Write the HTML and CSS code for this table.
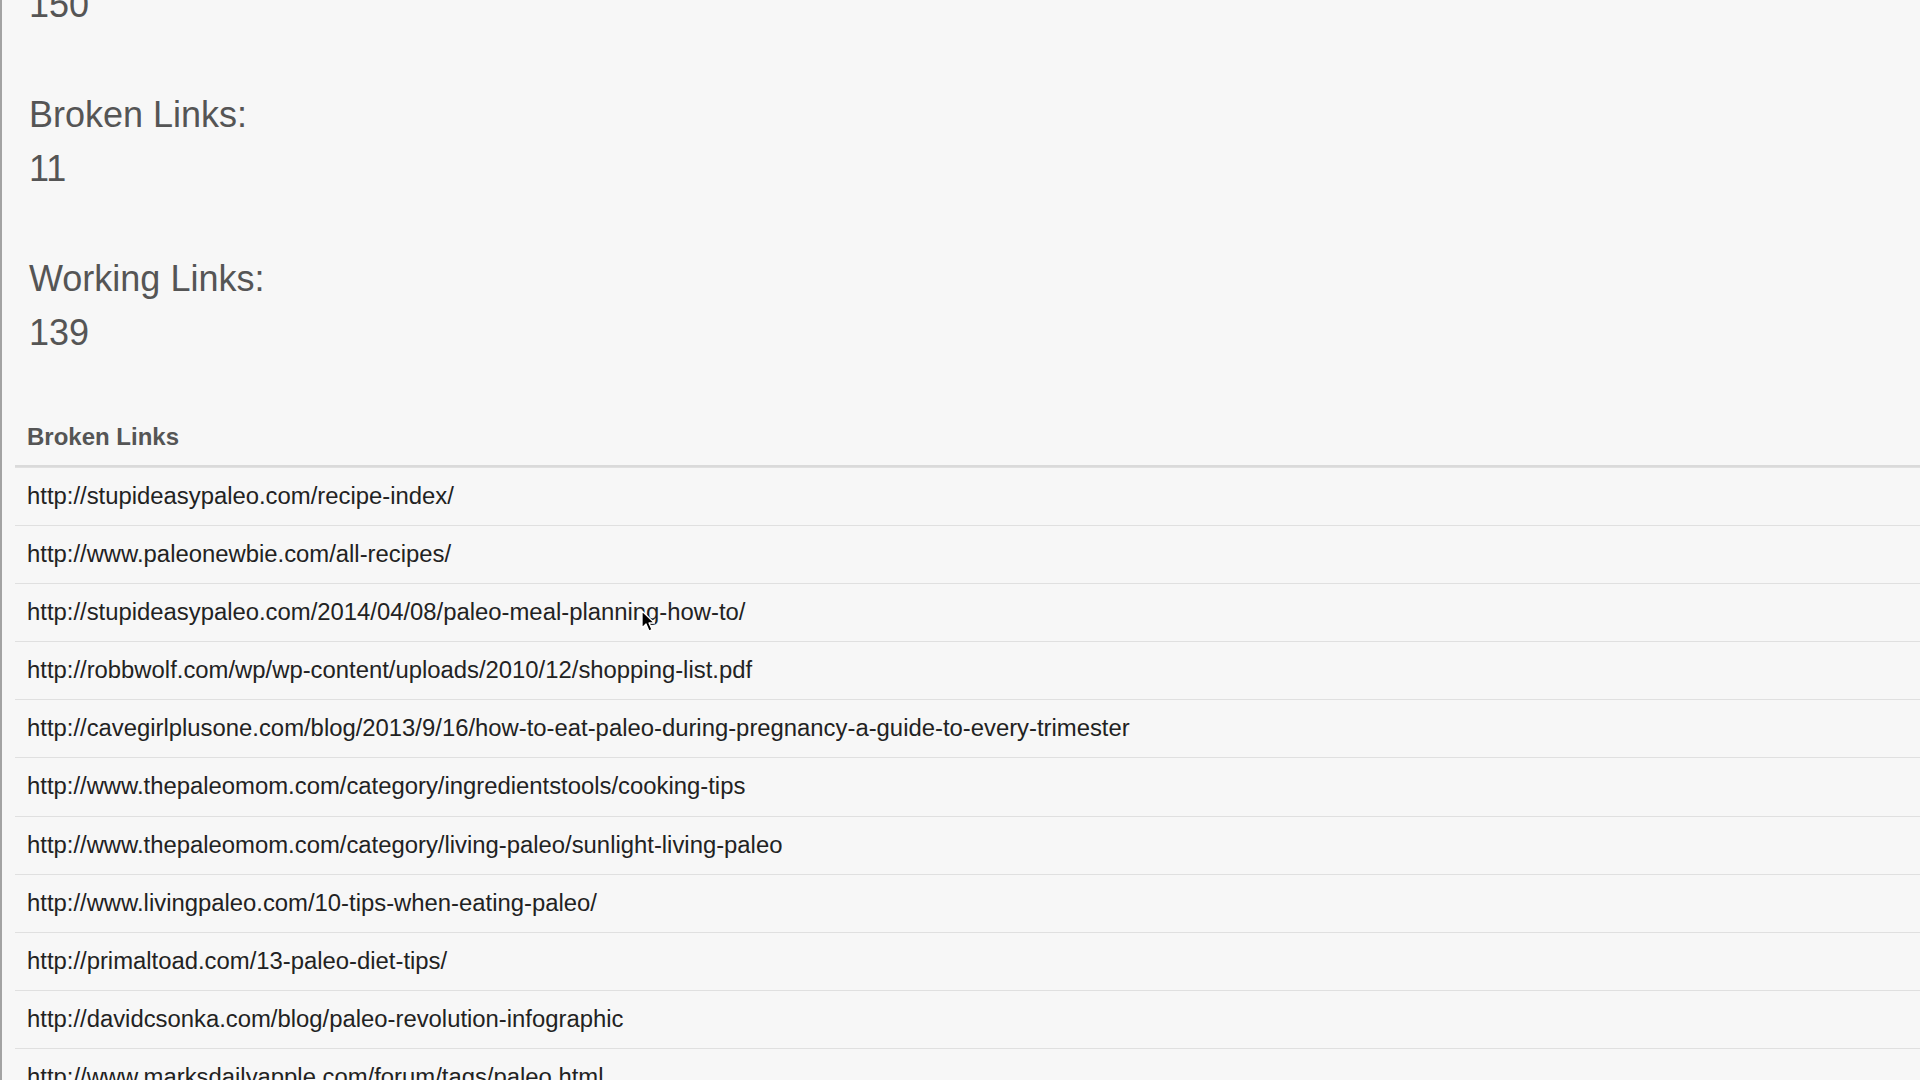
FILE: index.html
```html
<!DOCTYPE html>
<html lang="en">
<head>
<meta charset="utf-8">
<title>Link Report</title>
<link rel="stylesheet" href="styles.css">
</head>
<body>
<div class="page">
  <section class="stats">
    <div class="stat">
      <div class="stat-label">Total Links:</div>
      <div class="stat-value">150</div>
    </div>
    <div class="stat">
      <div class="stat-label">Broken Links:</div>
      <div class="stat-value">11</div>
    </div>
    <div class="stat">
      <div class="stat-label">Working Links:</div>
      <div class="stat-value">139</div>
    </div>
  </section>
  <table class="links">
    <thead>
      <tr><th>Broken Links</th></tr>
    </thead>
    <tbody>
      <tr><td>http://stupideasypaleo.com/recipe-index/</td></tr>
      <tr><td>http://www.paleonewbie.com/all-recipes/</td></tr>
      <tr><td>http://stupideasypaleo.com/2014/04/08/paleo-meal-planning-how-to/</td></tr>
      <tr><td>http://robbwolf.com/wp/wp-content/uploads/2010/12/shopping-list.pdf</td></tr>
      <tr><td>http://cavegirlplusone.com/blog/2013/9/16/how-to-eat-paleo-during-pregnancy-a-guide-to-every-trimester</td></tr>
      <tr><td>http://www.thepaleomom.com/category/ingredientstools/cooking-tips</td></tr>
      <tr><td>http://www.thepaleomom.com/category/living-paleo/sunlight-living-paleo</td></tr>
      <tr><td>http://www.livingpaleo.com/10-tips-when-eating-paleo/</td></tr>
      <tr><td>http://primaltoad.com/13-paleo-diet-tips/</td></tr>
      <tr><td>http://davidcsonka.com/blog/paleo-revolution-infographic</td></tr>
      <tr><td>http://www.marksdailyapple.com/forum/tags/paleo.html</td></tr>
    </tbody>
  </table>
</div>
<svg class="cursor" width="16" height="24" viewBox="0 0 16 24" aria-hidden="true">
  <path d="M1 1 L1 18 L5 14 L8 21 L11 19.6 L8 13 L13.5 13 Z" fill="#000" stroke="#fff" stroke-width="1.3" stroke-linejoin="round"/>
</svg>
</body>
</html>
```
FILE: styles.css
```css
html, body {
  margin: 0;
  padding: 0;
  height: 1080px;
  overflow: hidden;
  background: #f7f7f7;
}

body {
  font-family: "Liberation Sans", Arial, Helvetica, sans-serif;
  position: relative;
}

.page {
  border-left: 2px solid #a3a3a3;
  min-height: 1080px;
  padding-left: 13px;
  box-sizing: border-box;
}

.stats {
  margin-top: -76px;
  padding-left: 14px;
  color: #555555;
}

.stat {
  margin-bottom: 56px;
}

.stat-label,
.stat-value {
  font-size: 36px;
  line-height: 54px;
}

.links {
  width: 100%;
  border-collapse: separate;
  border-spacing: 0;
  margin-top: -8px;
}

.links th {
  text-align: left;
  font-weight: bold;
  font-size: 24px;
  line-height: 34px;
  color: #555555;
  padding: 12px 12px 11px 12px;
  border-bottom: 2px solid #dadada;
}

.links td {
  font-size: 23.85px;
  line-height: 33.1px;
  color: #222222;
  padding: 11px 12px 13px 12px;
  border-top: 1px solid #e0e0e0;
  white-space: nowrap;
}

.cursor {
  position: absolute;
  left: 641px;
  top: 610px;
}
```
